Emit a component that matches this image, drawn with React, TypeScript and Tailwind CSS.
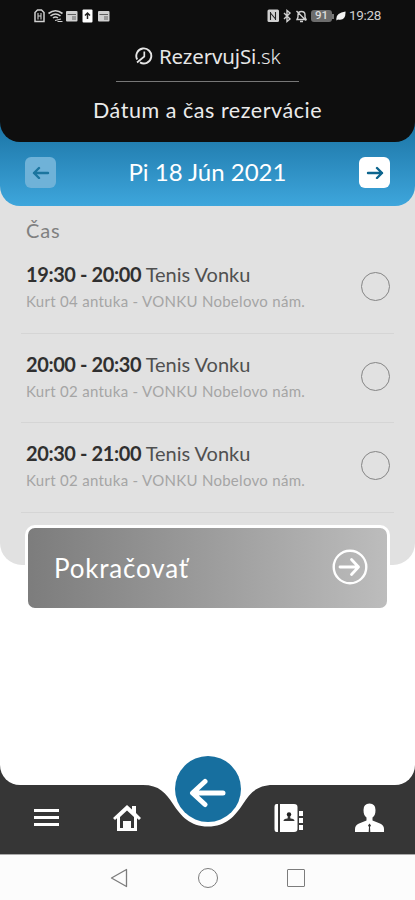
interface Slot {
  time: string;
  name: string;
  place: string;
}

const slots: Slot[] = [
  { time: "19:30 - 20:00", name: "Tenis Vonku", place: "Kurt 04 antuka - VONKU Nobelovo nám." },
  { time: "20:00 - 20:30", name: "Tenis Vonku", place: "Kurt 02 antuka - VONKU Nobelovo nám." },
  { time: "20:30 - 21:00", name: "Tenis Vonku", place: "Kurt 02 antuka - VONKU Nobelovo nám." },
];

function StatusBar() {
  return (
    <div className="flex h-8 items-center justify-between pl-[34px] pr-[33px] text-[#d0d0d0]">
      <svg width="76" height="14" viewBox="0 0 76 14" fill="none" stroke="currentColor">
        <path d="M3.500 1h4L10 3.500v9H1v-9z" strokeWidth="1.500" />
        <path d="M4 4v6.500M7 4v6.500M4 7h3" strokeWidth="1.100" />
        <path d="M14.500 4.500q7-5.500 14 0M16.500 7q5-4 10 0M19 9q2.500-2 5 0" strokeWidth="1.600" />
        <path d="M21 11.500l6-1.500M23.500 12.500h5" strokeWidth="1.200" />
        <rect x="32" y="2" width="11.500" height="10.500" rx="1" fill="currentColor" stroke="none" />
        <path d="M33.500 5.500h8.500M38 8h4M38 10h4" stroke="#444" strokeWidth=".8" />
        <rect x="48.500" y=".5" width="10" height="13" rx="1" fill="#fff" stroke="none" />
        <path d="M53.500 10V4M51 6.500L53.500 4 56 6.500" stroke="#222" strokeWidth="1.500" />
        <rect x="64" y="2" width="11.500" height="10.500" rx="1" fill="currentColor" stroke="none" />
        <path d="M65.500 5.500h8.500M70 8h4M70 10h4" stroke="#444" strokeWidth=".8" />
      </svg>
      <div className="flex items-center gap-[2px]">
        <svg width="40" height="14" viewBox="0 0 40 14" fill="none" stroke="currentColor">
          <rect x=".5" y=".5" width="11.500" height="12.500" rx="1.500" fill="currentColor" stroke="none" />
          <path d="M3.500 3v8M3.500 4l5 6M8.500 3v8" stroke="#222" strokeWidth="1.100" />
          <path d="M17 4l6 6-3 2.500v-11L23 4l-6 6" strokeWidth="1.400" />
          <path d="M30 10.500h9l-1-2.500V6q0-3.500-3.500-3.500T31 6v2zM33 12.500h3M29.500 2l9.500 9.500" strokeWidth="1.400" />
        </svg>
        <div className="ml-[2px] flex items-center">
          <span className="flex h-[12px] w-[21px] items-center justify-center rounded-[3px] bg-[#6c6c6c] font-['Roboto',sans-serif] text-[11.500px] font-medium leading-none text-[#ddd]">
            91
          </span>
          <span className="h-[5px] w-[2px] bg-[#777]" />
        </div>
        <svg width="10" height="10" viewBox="0 0 10 10">
          <path d="M.5 9.500Q-1 2 9.500.500 10 10 2 8.500z" fill="#f2f2f2" />
        </svg>
        <span className="ml-px w-[33px] whitespace-nowrap font-['Roboto',sans-serif] text-[13.500px] leading-none tracking-[-0.3px]">19:28</span>
      </div>
    </div>
  );
}

function Header() {
  return (
    <header className="flex h-[142px] flex-col items-stretch rounded-b-[20px] bg-[#0e0e0e]">
      <StatusBar />
      <div className="mt-[10px] flex h-7 items-center justify-center gap-[6px] text-[#e6e6e6]">
        <svg width="18" height="18" viewBox="0 0 18 18" fill="none" stroke="currentColor" strokeWidth="1.900">
          <path d="M2.200 12.500A7.500 7.500 0 1 1 5 15.400" />
          <path d="M2 15.500L9.300 9.500V4.500" strokeWidth="1.700" />
        </svg>
        <span className="w-[121px] whitespace-nowrap font-['Noto_Sans',sans-serif] text-[20.500px] leading-7 tracking-[-0.15px]">
          RezervujSi<span className="font-light">.sk</span>
        </span>
      </div>
      <div className="mx-auto mt-[11px] h-px w-[183px] bg-[#777]" />
      <h1 className="mt-[14px] text-center text-[21.500px] leading-7 tracking-[0.54px] text-[#ebebeb]">Dátum a čas rezervácie</h1>
    </header>
  );
}

function DateBar() {
  return (
    <div className="flex h-16 items-center justify-between px-[25px] pb-[4px]">
      <button className="flex size-[31px] items-center justify-center rounded-md bg-[#6fb2d8]" aria-label="Predchádzajúci deň">
        <svg width="18" height="14" viewBox="0 0 18 14" fill="none" stroke="#1b759f" strokeWidth="2.400" strokeLinecap="round" strokeLinejoin="round">
          <path d="M16 8H2M7 3L2 8l5 5" />
        </svg>
      </button>
      <span className="whitespace-nowrap text-[24px] leading-8 text-white">Pi 18 Jún 2021</span>
      <button className="flex size-[31px] items-center justify-center rounded-md bg-white" aria-label="Nasledujúci deň">
        <svg width="18" height="14" viewBox="0 0 18 14" fill="none" stroke="#0d658e" strokeWidth="2.400" strokeLinecap="round" strokeLinejoin="round">
          <path d="M2 8h14M11 3l5 5-5 5" />
        </svg>
      </button>
    </div>
  );
}

function SlotRow({ slot }: { slot: Slot }) {
  return (
    <li className="flex h-[89.700px] items-start justify-between border-b border-[#d5d5d5] pl-[5px] pr-[4.500px] pt-[16px]">
      <div className="whitespace-nowrap">
        <p className="text-[20px] leading-7 text-[#505050]">
          <b className="tracking-[-0.4px] text-[#303030]">{slot.time}</b> {slot.name}
        </p>
        <p className="mt-px text-[15px] leading-6 tracking-[0.29px] text-[#a5a5a5]">{slot.place}</p>
      </div>
      <span className="mt-[12px] size-[29px] rounded-full border-[1.500px] border-[#858585]" />
    </li>
  );
}

function ContinueButton() {
  return (
    <button className="relative mx-[25px] -mt-[40px] flex h-[86px] shrink-0 items-center justify-between rounded-[10px] border-[3px] border-white bg-linear-to-r from-[#7c7c7c] to-[#bdbdbd] bg-origin-border pb-[3px] pl-[26px] pr-[19px] text-white">
      <span className="mt-[2px] text-[26px] leading-8 tracking-[0.8px]">Pokračovať</span>
      <svg width="36" height="36" viewBox="0 0 36 36" fill="none" stroke="#fff" strokeWidth="2.400" strokeLinecap="round" strokeLinejoin="round">
        <circle cx="18" cy="18" r="16.300" />
        <path d="M8 18h18.500M19.500 10.500l7 7.500-7 7.500" strokeWidth="2.800" />
      </svg>
    </button>
  );
}

function TabBar() {
  return (
    <nav className="relative mt-auto h-[89px] shrink-0 bg-[#363636]">
      <div className="h-5 rounded-b-[20px] bg-white" />
      {/* notch under the round back button */}
      <svg className="absolute left-[143px] top-5" width="130" height="42" viewBox="0 0 130 42">
        <path d="M0 0C16 0 23 8 30 19 38 31 47 41.500 65 41.500S92 31 100 19C107 8 114 0 130 0z" fill="#fff" />
      </svg>
      <button className="absolute -top-[9px] left-[175px] flex size-[66px] items-center justify-center rounded-full bg-[#176f9f]" aria-label="Späť">
        <svg className="mt-2" width="38" height="30" viewBox="0 0 38 30" fill="none" stroke="#fff" strokeWidth="5" strokeLinecap="round" strokeLinejoin="round">
          <path d="M34 15H4M16 3.500L3.500 15 16 26.500" />
        </svg>
      </button>
      <div className="flex h-[69px] items-center pb-[4px] pl-[34px]">
        <svg width="25" height="17" viewBox="0 0 25 17" fill="#fff">
          <path d="M0 0h25v3H0zM0 7h25v3H0zM0 14h25v3H0z" />
        </svg>
        <svg className="ml-[54px]" width="28" height="28" viewBox="0 0 28 28" fill="#fff">
          <path d="M14 1l5 4.500V2h4v7l5 5-2 2-2-1.700V27H4V14.300L2 16l-2-2z" />
          <path d="M14 6.500L7 13v11h3v-7h8v7h3V13z" fill="#363636" />
          <path d="M11 18h6v9h-6z" />
        </svg>
        <svg className="ml-[133px]" width="30" height="30" viewBox="0 0 30 30" fill="#fff">
          <path d="M4 1v28H2.500Q.500 29 .500 26V4Q.500 1 2.500 1z" />
          <path d="M6 1h14q3.500 0 3.500 3v22q0 3-3.500 3H6z" />
          <path d="M25 8h4v5h-4zM25 15h4v5h-4zM25 22h4v5h-4z" />
          <circle cx="15" cy="11.500" r="2.200" fill="#222" />
          <path d="M14 13h2l.5 2.500q4 .3 4 2.500h-11q0-2.200 4-2.500z" fill="#363636" />
        </svg>
        <svg className="ml-[51px]" width="29" height="30" viewBox="0 0 29 30" fill="#fff">
          <path d="M14.500 .500Q8.500 .500 8.500 7c0 4 1 6 3 7.500v3L4 20.500Q0 22 0 26v3h29v-3q0-4-4-5.500l-7.500-3v-3c2-1.500 3-3.500 3-7.500Q20.500 .500 14.500 .500z" />
          <path d="M14.500 20.500l1.500 2-1 1.500.3 5h-1.600l.3-5-1-1.500z" fill="#363636" />
        </svg>
      </div>
    </nav>
  );
}

function SystemNav() {
  return (
    <div className="h-[46px] shrink-0 border-t border-[#aaa] bg-[#fcfcfc]">
      <div className="flex h-full items-center justify-between px-[110px]">
        <svg width="18" height="20" viewBox="0 0 18 20" fill="none" stroke="#7c7c7c" strokeWidth="1.300" strokeLinejoin="round">
          <path d="M16.500 1.500v17L1.500 10z" />
        </svg>
        <span className="size-5 rounded-full border border-[#7c7c7c]" />
        <span className="size-[18px] rounded-[1px] border border-[#7c7c7c]" />
      </div>
    </div>
  );
}

export default function App() {
  return (
    <div className="flex h-[900px] w-full flex-col overflow-hidden bg-white font-['Lato',sans-serif]">
      <main className="h-[565px] shrink-0 rounded-b-[22px] bg-[#e1e1e1]">
        <div className="rounded-b-[20px] bg-linear-to-b from-[#1a74a5] from-60% to-[#3ea6dc]">
          <Header />
          <DateBar />
        </div>
        <section className="px-[21px]">
          <h2 className="h-[38px] pl-[5px] pt-[10px] text-[20px] leading-7 tracking-[0.8px] text-[#808080]">Čas</h2>
          <ul>
            {slots.map((slot) => (
              <SlotRow key={slot.time} slot={slot} />
            ))}
          </ul>
        </section>
      </main>
      <ContinueButton />
      <TabBar />
      <SystemNav />
    </div>
  );
}
